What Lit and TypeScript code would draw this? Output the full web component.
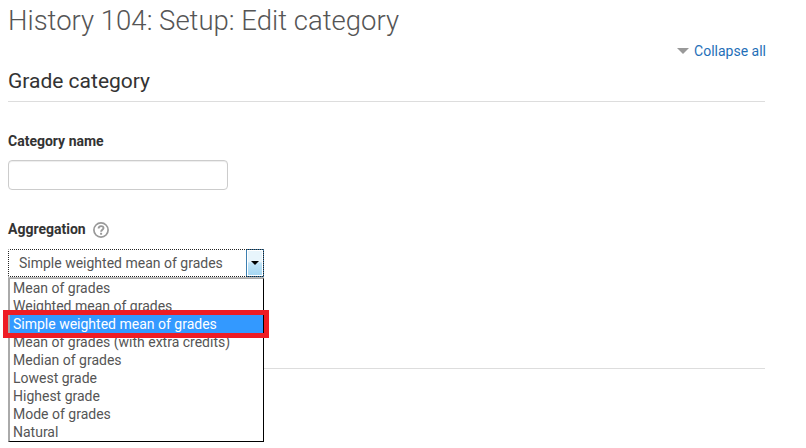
import { LitElement, html, css } from "lit";
import { customElement } from "lit/decorators.js";
import { classMap } from "lit/directives/class-map.js";

const OPTIONS = [
  "Mean of grades",
  "Weighted mean of grades",
  "Simple weighted mean of grades",
  "Mean of grades (with extra credits)",
  "Median of grades",
  "Lowest grade",
  "Highest grade",
  "Mode of grades",
  "Natural",
];
const SELECTED = 2;

@customElement("app-root")
export class AppRoot extends LitElement {
  static styles = css`
    :host {
      display: block;
      height: 448px;
      overflow: hidden;
      background: #fff;
      color: #333;
      font: 14px/20px Roboto, sans-serif;
    }
    * { box-sizing: border-box; }
    main { width: 765px; padding-left: 8px; }
    h1 { margin: 0; height: 41px; font-size: 27.5px; line-height: 42px; font-weight: 300; color: #555; white-space: nowrap; }
    .toolbar { display: flex; justify-content: flex-end; align-items: center; height: 20px; gap: 4px; color: #1f6fb8; margin-right: -1px; }
    .toolbar svg { margin-right: 1px; }
    h2 { margin: 0; height: 41px; border-bottom: 1px solid #ddd; font-size: 21px; line-height: 40px; font-weight: 400; }
    .label { display: flex; align-items: center; gap: 7px; height: 20px; font-weight: 700; }
    .name { margin-top: 29px; }
    .input { width: 220px; height: 30px; margin-top: 9px; border: 1px solid #ccc; border-radius: 4px; box-shadow: inset 0 1px 1px rgba(0,0,0,.075); }
    .agg { margin-top: 29px; }
    .agg svg { margin-top: 2px; }
    .picker { position: relative; width: 256px; height: 129px; padding-top: 10px; }
    .select { display: flex; height: 29px; border-bottom: 1px solid #bbb; position: relative; color: #555; }
    .value { flex: 1; padding-left: 11px; line-height: 29px; }
    .focus {
      position: absolute; left: 0; top: 0; width: 256px; height: 28px; border-radius: 2px;
      background:
        repeating-linear-gradient(90deg, #222 0 1px, transparent 1px 2px) top / 100% 1px no-repeat,
        repeating-linear-gradient(90deg, #222 0 1px, transparent 1px 2px) bottom / 100% 1px no-repeat,
        repeating-linear-gradient(#222 0 1px, transparent 1px 2px) left / 1px 100% no-repeat,
        repeating-linear-gradient(#222 0 1px, transparent 1px 2px) right / 1px 100% no-repeat;
    }
    .arrow { width: 18px; height: 28px; border: 1px solid #3c7fb1; background: linear-gradient(#e8f5fc 45%, #c3e5f8 50%, #a5d7f3) content-box, #fff; padding: 1px; display: grid; place-items: center; }
    .list { position: absolute; left: 0; top: 39px; width: 256px; border: solid #000; border-width: 1px 1px 1px 2px; border-color: #aaa #000 #000 #aaa; background: #fff; color: #555; }
    .option { height: 18px; line-height: 18px; padding-left: 3px; white-space: nowrap; }
    .on { background: #39f; color: #fff; }
    .mark { position: absolute; left: -5px; top: 71px; width: 266px; height: 28px; border: 5px solid #ee1c24; }
    .end { height: 1px; background: #ddd; }
    svg { display: block; }
  `;

  render() {
    return html`<main>
      <h1>History 104: Setup: Edit category</h1>
      <div class="toolbar">
        <svg width="12" height="6" viewBox="0 0 12 6"><path d="M0 0h12L6 6z" fill="#999" /></svg>
        <span>Collapse all</span>
      </div>
      <h2>Grade category</h2>
      <div class="label name">Category name</div>
      <div class="input"></div>
      <div class="label agg">
        <span>Aggregation</span>
        <svg width="16" height="16" viewBox="0 0 16 16" fill="none" stroke="#999">
          <circle cx="8" cy="8" r="7.1" stroke-width="1.7" />
          <path d="M5.6 6.5C5.6 3.4 10.5 3.4 10.5 6.1 10.5 7.8 8.1 7.9 8.1 9.8" stroke-width="1.9" />
          <path d="M8.1 10.8v1.9" stroke-width="2" />
        </svg>
      </div>
      <div class="picker">
        <div class="select">
          <span class="value">${OPTIONS[SELECTED]}</span>
          <span class="arrow"><svg width="8" height="4" viewBox="0 0 8 4"><path d="M0 0h8L4 4z" fill="#000" /></svg></span>
          <span class="focus"></span>
        </div>
        <div class="list">
          ${OPTIONS.map((o, i) => html`<div class=${classMap({ option: true, on: i === SELECTED })}>${o}</div>`)}
        </div>
        <div class="mark"></div>
      </div>
      <div class="end"></div>
    </main>`;
  }
}
